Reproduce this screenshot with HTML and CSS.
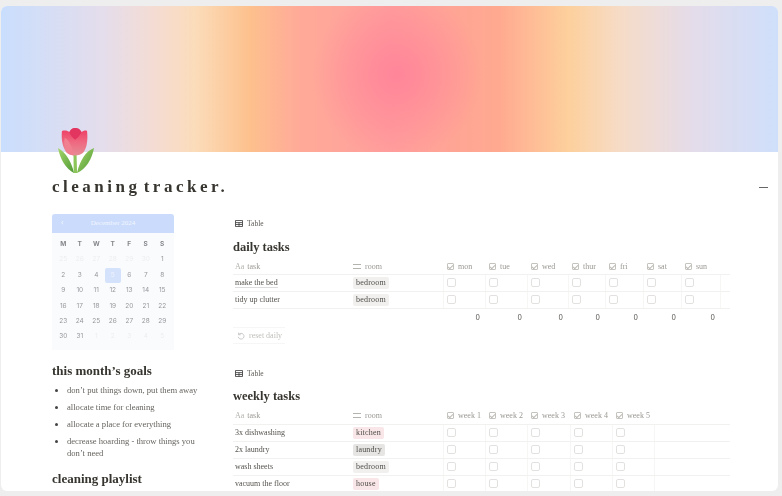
FILE: index.html
```html
<!doctype html>
<html lang="en">
<head>
    <meta charset="UTF-8">
    <title>cleaning tracker</title>
    <link rel="stylesheet" href="styles.css">
</head>
<body>
<div class="window">
    <div class="cover"></div>
    <div class="page">
        <svg class="tulip" viewBox="0 0 38 48">
            <defs>
                <linearGradient id="petal" x1="0" y1="0" x2="0" y2="1">
                    <stop offset="0" stop-color="#ee3a62"/>
                    <stop offset="0.55" stop-color="#ee6b82"/>
                    <stop offset="1" stop-color="#e58c94"/>
                </linearGradient>
                <linearGradient id="leaf" x1="0" y1="0" x2="1" y2="1">
                    <stop offset="0" stop-color="#a5d66a"/>
                    <stop offset="1" stop-color="#4f9a34"/>
                </linearGradient>
            </defs>
            <path d="M15.500 27h3l.6 19h-3.400z" fill="#8cc65a"/>
            <path d="M0 21C7 25 13 33 16 46 8 42 2 32 0 21z" fill="url(#leaf)"/>
            <path d="M36 21C28 24 22 33 19 46 28 42 34 32 36 21z" fill="url(#leaf)"/>
            <g transform="translate(-.7 1) scale(.93 .98)">
                <path d="M5 3C9 2 11 3 13 4 15 1 17 0 19 0 22 0 24 1 26 4 28 3 30 2 32 3 33 12 32 20 28 25 24 29 14 29 10 25 6 20 4 12 5 3z" fill="url(#petal)"/>
                <path d="M8 10C12 12 16 18 18 28 14 28 11 26 10 25 7 21 7 15 8 10z" fill="#f0808f"/>
                <path d="M13 4C15 1 17 0 19 0 22 0 24 1 26 4 24 8 22 10 19 12 17 10 14 8 13 4z" fill="#e23560"/>
            </g>
        </svg>
        <div class="title-row">
            <h1>cleaning tracker.</h1>
            <span class="collapse"></span>
        </div>
        <div class="columns">
            <div class="side">
                <div class="calendar">
                    <div class="cal-head"><span class="cal-prev">&lsaquo;</span><span>December 2024</span></div>
                    <div class="cal-grid">
                        <b>M</b><b>T</b><b>W</b><b>T</b><b>F</b><b>S</b><b>S</b>
                        <i>25</i><i>26</i><i>27</i><i>28</i><i>29</i><i>30</i><span>1</span>
                        <span>2</span><span>3</span><span>4</span><span class="today">5</span><span>6</span><span>7</span><span>8</span>
                        <span>9</span><span>10</span><span>11</span><span>12</span><span>13</span><span>14</span><span>15</span>
                        <span>16</span><span>17</span><span>18</span><span>19</span><span>20</span><span>21</span><span>22</span>
                        <span>23</span><span>24</span><span>25</span><span>26</span><span>27</span><span>28</span><span>29</span>
                        <span>30</span><span>31</span><i>1</i><i>2</i><i>3</i><i>4</i><i>5</i>
                    </div>
                </div>
                <h2 class="goals-title">this month’s goals</h2>
                <ul class="goals">
                    <li>don’t put things down, put them away</li>
                    <li>allocate time for cleaning</li>
                    <li>allocate a place for everything</li>
                    <li>decrease hoarding - throw things you don’t need</li>
                </ul>
                <h2 class="playlist-title">cleaning playlist</h2>
            </div>
            <div class="main">
                <div class="view-tab">
                    <svg class="table-icon" viewBox="0 0 9 8"><path d="M.5.500h8v7h-8zM.5 3h8M.5 5.200h8M4.500 3v4.500" fill="none" stroke="#444" stroke-width="1"/></svg>
                    Table
                </div>
                <h2>daily tasks</h2>
                <table class="daily">
                    <colgroup>
                        <col class="c-task"><col class="c-room">
                        <col class="c-42"><col class="c-42"><col class="c-41"><col class="c-37"><col class="c-38"><col class="c-38"><col class="c-39"><col>
                    </colgroup>
                    <thead>
                        <tr>
                            <th><span class="aa">Aa</span>task</th>
                            <th><span class="lines"></span>room</th>
                            <th><span class="hbox"></span>mon</th>
                            <th><span class="hbox"></span>tue</th>
                            <th><span class="hbox"></span>wed</th>
                            <th><span class="hbox"></span>thur</th>
                            <th><span class="hbox"></span>fri</th>
                            <th><span class="hbox"></span>sat</th>
                            <th><span class="hbox"></span>sun</th>
                            <th></th>
                        </tr>
                    </thead>
                    <tbody>
                        <tr>
                            <td><span class="underlined">make the bed</span></td>
                            <td><span class="tag grey">bedroom</span></td>
                            <td><span class="box"></span></td><td><span class="box"></span></td><td><span class="box"></span></td><td><span class="box"></span></td><td><span class="box"></span></td><td><span class="box"></span></td><td><span class="box"></span></td><td></td>
                        </tr>
                        <tr>
                            <td>tidy up clutter</td>
                            <td><span class="tag grey">bedroom</span></td>
                            <td><span class="box"></span></td><td><span class="box"></span></td><td><span class="box"></span></td><td><span class="box"></span></td><td><span class="box"></span></td><td><span class="box"></span></td><td><span class="box"></span></td><td></td>
                        </tr>
                    </tbody>
                    <tfoot>
                        <tr>
                            <td></td><td></td>
                            <td>0</td><td>0</td><td>0</td><td>0</td><td>0</td><td>0</td><td>0</td><td></td>
                        </tr>
                    </tfoot>
                </table>
                <div class="reset">
                    <svg viewBox="0 0 10 10"><path d="M2.200 3.200A3.600 3.600 0 1 1 1.600 6M2 .8v2.600h2.600" fill="none" stroke="#bbb" stroke-width="1"/></svg>
                    reset daily
                </div>
                <div class="view-tab second">
                    <svg class="table-icon" viewBox="0 0 9 8"><path d="M.5.500h8v7h-8zM.5 3h8M.5 5.200h8M4.500 3v4.500" fill="none" stroke="#444" stroke-width="1"/></svg>
                    Table
                </div>
                <h2>weekly tasks</h2>
                <table class="weekly">
                    <colgroup>
                        <col class="c-task"><col class="c-room">
                        <col class="c-42"><col class="c-42"><col class="c-43"><col class="c-42"><col class="c-42"><col>
                    </colgroup>
                    <thead>
                        <tr>
                            <th><span class="aa">Aa</span>task</th>
                            <th><span class="lines"></span>room</th>
                            <th><span class="hbox"></span>week 1</th>
                            <th><span class="hbox"></span>week 2</th>
                            <th><span class="hbox"></span>week 3</th>
                            <th><span class="hbox"></span>week 4</th>
                            <th><span class="hbox"></span>week 5</th>
                            <th></th>
                        </tr>
                    </thead>
                    <tbody>
                        <tr>
                            <td>3x dishwashing</td>
                            <td><span class="tag pink">kitchen</span></td>
                            <td><span class="box"></span></td><td><span class="box"></span></td><td><span class="box"></span></td><td><span class="box"></span></td><td><span class="box"></span></td><td></td>
                        </tr>
                        <tr>
                            <td>2x laundry</td>
                            <td><span class="tag dark">laundry</span></td>
                            <td><span class="box"></span></td><td><span class="box"></span></td><td><span class="box"></span></td><td><span class="box"></span></td><td><span class="box"></span></td><td></td>
                        </tr>
                        <tr>
                            <td>wash sheets</td>
                            <td><span class="tag grey">bedroom</span></td>
                            <td><span class="box"></span></td><td><span class="box"></span></td><td><span class="box"></span></td><td><span class="box"></span></td><td><span class="box"></span></td><td></td>
                        </tr>
                        <tr>
                            <td>vacuum the floor</td>
                            <td><span class="tag pink">house</span></td>
                            <td><span class="box"></span></td><td><span class="box"></span></td><td><span class="box"></span></td><td><span class="box"></span></td><td><span class="box"></span></td><td></td>
                        </tr>
                    </tbody>
                </table>
            </div>
        </div>
    </div>
</div>
</body>
</html>
```

FILE: styles.css
```css
*
{
    box-sizing: border-box;
    font-family: "Liberation Serif", serif;
}

html, body
{
    height: 100%;
}

body
{
    margin: 0;
    background-color: #eeeeee;
    overflow: hidden;
}

.window
{
    height: 485px;
    margin: 6px 4px 0 1px;
    background-color: #fff;
    border-radius: 6px;
    overflow: hidden;
}

.cover
{
    height: 146px;
    background:
        radial-gradient(ellipse 85px 85px at 51% 47%, rgb(255, 133, 153), rgba(255, 133, 153, 0)),
        linear-gradient(90deg, #c9defd 0%, #e4ddec 13%, #f5dcd2 20%, #fbdcba 25%, #fdc18d 32%, #ffab98 38%, #ff9f9c 50%, #ffa990 64%, #fdd09c 73%, #f6dcc8 80%, #e4dcea 89%, #cfdffb 100%);
}

.page
{
    padding-left: 51px;
    filter: blur(.3px);
}

.tulip
{
    display: block;
    width: 38px;
    height: 48px;
    margin: -25px 0 0 6px;
}

.title-row
{
    display: flex;
    justify-content: space-between;
    align-items: center;
    height: 24px;
    padding-right: 10px;
}

h1
{
    margin: 0;
    font-size: 17px;
    font-weight: bold;
    letter-spacing: 3.500px;
    word-spacing: -4.5px;
    color: #37352f;
}

.collapse
{
    width: 9px;
    height: 1px;
    background-color: #666;
}

.columns
{
    display: flex;
    gap: 35px;
    margin-top: 15px;
}

.side
{
    width: 146px;
    flex-shrink: 0;
}

.main
{
    width: 497px;
}

.calendar
{
    width: 122px;
    height: 136px;
    background-color: #fafbfd;
}

.cal-head
{
    position: relative;
    height: 19px;
    line-height: 18px;
    text-align: center;
    font-family: Inter, sans-serif;
    font-size: 7px;
    color: #f2f6ff;
    background-color: #cadbfc;
    border-radius: 3px 3px 0 0;
}

.cal-prev
{
    position: absolute;
    left: 9px;
    font-family: Inter, sans-serif;
}

.cal-grid
{
    display: grid;
    grid-template-columns: repeat(7, 16.5px);
    grid-auto-rows: 15.4px;
    padding: 4px 0 0 3px;
    font-size: 6.500px;
    color: #96989c;
    text-align: center;
    line-height: 15px;
}

.cal-grid b, .cal-grid i, .cal-grid span
{
    font-family: Inter, sans-serif;
    font-style: normal;
}

.cal-grid b
{
    color: #85878b;
}

.cal-grid i
{
    color: #eceef1;
}

.cal-grid .today
{
    color: #eef3ff;
    background-color: #d5e2fb;
    border-radius: 2px;
}

h2
{
    margin: 0;
    font-size: 12.500px;
    line-height: 16px;
    font-weight: bold;
    color: #37352f;
}

.side h2
{
    font-size: 13px;
}

.goals-title
{
    margin-top: 13px;
}

.goals
{
    margin: 5px 0 0;
    padding: 0 0 0 15px;
    font-size: 8.600px;
    color: #66645f;
    line-height: 12px;
}

.goals li
{
    margin-bottom: 5px;
}

.goals li::marker
{
    color: #444;
}

.playlist-title
{
    margin-top: 12px;
}

.view-tab
{
    display: flex;
    align-items: center;
    gap: 4px;
    height: 12px;
    margin: 3px 0 10px 2px;
    font-size: 7.500px;
    color: #5c5a55;
}

.view-tab.second
{
    margin-top: 23px;
    margin-bottom: 9px;
}

.table-icon
{
    width: 8px;
    height: 7px;
}

table
{
    width: 497px;
    table-layout: fixed;
    border-collapse: collapse;
    font-size: 8px;
    margin-top: 4px;
}

.c-task { width: 117px; }
.c-room { width: 93px; }
.c-37 { width: 37px; }
.c-38 { width: 38px; }
.c-39 { width: 39px; }
.c-41 { width: 41px; }
.c-42 { width: 42px; }
.c-43 { width: 43px; }

th
{
    height: 15px;
    padding: 0 0 0 2px;
    font-weight: normal;
    text-align: left;
    color: #9a9893;
    white-space: nowrap;
}

.weekly th
{
    height: 16px;
}

th:nth-child(2)
{
    padding-left: 3px;
}

th:nth-child(n+3)
{
    padding-left: 4px;
}

.aa
{
    margin-right: 3px;
    font-size: 8px;
    color: #b5b3ae;
}

.lines
{
    display: inline-block;
    width: 8px;
    height: 5px;
    margin-right: 4px;
    border-top: 1px solid #b5b3ae;
    border-bottom: 1px solid #b5b3ae;
}

.hbox
{
    display: inline-block;
    width: 7px;
    height: 7px;
    margin-right: 4px;
    vertical-align: -1px;
    border: 1px solid #c5c3be;
    border-radius: 1px;
}

.hbox::after
{
    content: "";
    display: block;
    width: 2px;
    height: 4px;
    margin: 0 auto;
    border-right: 1px solid #bcbab5;
    border-bottom: 1px solid #bcbab5;
    transform: rotate(45deg);
}

td
{
    height: 17px;
    padding: 0 0 0 2px;
    color: #55534e;
    white-space: nowrap;
    border-top: 1px solid #f1f1f0;
    border-bottom: 1px solid #f1f1f0;
}

td:nth-child(n+3)
{
    padding-left: 3px;
    border-left: 1px solid #f6f6f5;
}

td:nth-child(2)
{
    padding-left: 3px;
}

tfoot td, tfoot td:nth-child(n+3)
{
    height: 18px;
    border: none;
    padding: 1px 5px 0 0;
    text-align: right;
    color: #55534e;
    font-family: Inter, sans-serif;
    font-size: 7px;
}

.underlined
{
    border-bottom: 1px solid #ddd;
}

.tag
{
    display: inline-block;
    height: 12px;
    line-height: 12px;
    padding: 0 3px;
    border-radius: 2px;
    color: #4f4d48;
    letter-spacing: .2px;
}

.tag.grey { background-color: #f1f0ef; }
.tag.pink { background-color: #f9e6e8; }
.tag.dark { background-color: #e6e5e4; }

.box
{
    display: block;
    width: 9px;
    height: 9px;
    border: 1px solid #e2e1df;
    border-radius: 2px;
}

.reset
{
    display: flex;
    align-items: center;
    gap: 4px;
    width: 52px;
    height: 17px;
    margin-top: 1px;
    padding-left: 4px;
    font-size: 8px;
    color: #c0bfbb;
    border-top: 1px solid #f6f6f6;
    border-bottom: 1px solid #f6f6f6;
}

.reset svg
{
    width: 8px;
    height: 8px;
}
```
